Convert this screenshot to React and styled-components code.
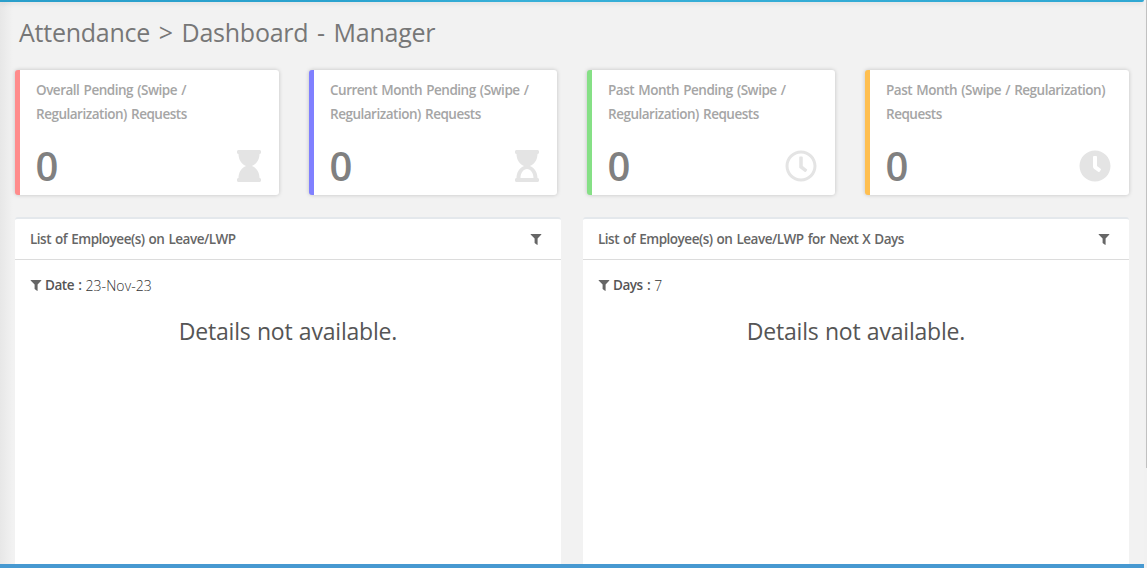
import React from "react";
import styled, { createGlobalStyle } from "styled-components";
import { FaHourglass, FaHourglassStart, FaRegClock, FaClock } from "react-icons/fa";

const GlobalStyle = createGlobalStyle`
  * { box-sizing: border-box; }
  body {
    margin: 0;
    overflow: hidden;
    background: #f2f2f2;
    color: #555;
    font-family: "Open Sans", "Noto Sans", sans-serif;
  }
`;

const Frame = styled.div`
  display: flex;
  width: 1147px;
  height: 568px;
  overflow: hidden;
`;

const Page = styled.div`
  display: flex;
  flex-direction: column;
  width: 1144px;
  height: 568px;
  background: linear-gradient(to right, #e7e7e7, #f2f2f2 13px);
`;

const TopBar = styled.div`
  flex: none;
  height: 2px;
  border-bottom-right-radius: 2px;
  background: linear-gradient(to right, #2a9fcb, #2ba3cf 30%, #38b0d8 45%, #30a8d3);
  box-shadow: 0 1px 5px rgba(0, 0, 0, 0.14);
`;

const Content = styled.main`
  flex: 1;
  display: flex;
  flex-direction: column;
  min-height: 0;
  padding: 0 14px 0 15px;
`;

const Title = styled.h1`
  flex: none;
  height: 68px;
  margin: 0;
  padding-left: 4px;
  font-size: 25px;
  font-weight: 400;
  line-height: 61px;
  letter-spacing: -0.25px;
  word-spacing: 2.5px;
  color: #777;
  white-space: nowrap;
`;

const Cards = styled.section`
  flex: none;
  display: grid;
  grid-template-columns: 264px 248px 248px 264px;
  column-gap: 30px;
`;

const Card = styled.article`
  display: flex;
  flex-direction: column;
  justify-content: space-between;
  height: 125px;
  padding: 8px 18px 13px 16px;
  border-left: 5px solid ${(p) => p.$accent};
  border-radius: 3px;
  background: #fff;
  box-shadow: 0 0 4px rgba(0, 0, 0, 0.2);
`;

const CardLabel = styled.div`
  font-size: 13.5px;
  font-weight: 600;
  line-height: 24px;
  letter-spacing: -0.49px;
  word-spacing: 1.2px;
  color: #a5a5a5;
  white-space: nowrap;
`;

const CardFooter = styled.div`
  display: flex;
  align-items: flex-end;
  justify-content: space-between;
  height: 33px;
  color: #e4e4e4;

  svg { display: block; height: 32px; width: ${(p) => p.$iconWidth}px; }
`;

const Count = styled.span`
  margin-left: -0.5px;
  font-size: 40px;
  font-weight: 600;
  line-height: 32px;
  color: #808080;
`;

const Panels = styled.section`
  flex: 1;
  display: grid;
  grid-template-columns: 546px 546px;
  column-gap: 22px;
  margin-top: 22px;
  min-height: 0;
`;

const Panel = styled.article`
  border-top: 2px solid #e4e8ec;
  border-radius: 3px 3px 0 0;
  background: #fff;
`;

const PanelHeader = styled.header`
  display: flex;
  align-items: center;
  justify-content: space-between;
  height: 41px;
  padding: 0 19px 0 15px;
  border-bottom: 1px solid #dcdcdc;
`;

const PanelTitle = styled.h2`
  margin: 0;
  font-size: 13.5px;
  font-weight: 600;
  letter-spacing: -0.49px;
  word-spacing: 1px;
  color: #666;
  white-space: nowrap;
`;

const Funnel = styled.svg`
  flex: none;
  width: 12px;
  height: 12px;
  fill: #666;
`;

const FilterIcon = () => (
  <Funnel viewBox="0 0 12 12">
    <path d="M1 1h10q.6 0 .4.6L7.6 5.6V11.5q0 .7-.6.3L4.6 10V5.6L.6 1.6Q.4 1 1 1z" />
  </Funnel>
);

const FilterRow = styled.div`
  display: flex;
  align-items: center;
  height: 20px;
  margin-top: 15px;
  padding-left: 15px;
  font-size: 14px;
  font-weight: 300;
  letter-spacing: 0.08px;
  white-space: nowrap;
  color: #333;

  strong {
    margin: 0 4px 0 3px;
    font-size: 13.5px;
    font-weight: 600;
    letter-spacing: -0.45px;
    word-spacing: 1.1px;
    color: #555;
  }
`;

const Empty = styled.p`
  margin: 18px 0 0;
  font-size: 23px;
  line-height: 36px;
  letter-spacing: -0.2px;
  word-spacing: 0.6px;
  text-align: center;
  color: #555;
`;

const BottomBar = styled.div`
  flex: none;
  height: 4px;
  background: #4799d1;
`;

const ScrollTrack = styled.div`
  width: 3px;
  padding-left: 2px;
  background: #f1f1f1;
`;

const ScrollThumb = styled.div`
  height: 468px;
  background: #c1c1c1;
`;

const cards = [
  { lines: ["Overall Pending (Swipe /", "Regularization) Requests"], accent: "#ff8c8c", Icon: FaHourglass, width: 24 },
  { lines: ["Current Month Pending (Swipe /", "Regularization) Requests"], accent: "#8080ff", Icon: FaHourglassStart, width: 24 },
  { lines: ["Past Month Pending (Swipe /", "Regularization) Requests"], accent: "#86e086", Icon: FaRegClock, width: 32 },
  { lines: ["Past Month (Swipe / Regularization)", "Requests"], accent: "#ffbf50", Icon: FaClock, width: 32 },
];

const panels = [
  { title: "List of Employee(s) on Leave/LWP", label: "Date :", value: "23-Nov-23" },
  { title: "List of Employee(s) on Leave/LWP for Next X Days", label: "Days :", value: "7" },
];

export default function App() {
  return (
    <Frame>
      <GlobalStyle />
      <Page>
        <TopBar />
        <Content>
          <Title>Attendance &gt; Dashboard - Manager</Title>
          <Cards>
            {cards.map(({ lines, accent, Icon, width }) => (
              <Card key={accent} $accent={accent}>
                <CardLabel>
                  {lines[0]}
                  <br />
                  {lines[1]}
                </CardLabel>
                <CardFooter $iconWidth={width}>
                  <Count>0</Count>
                  <Icon />
                </CardFooter>
              </Card>
            ))}
          </Cards>
          <Panels>
            {panels.map((panel) => (
              <Panel key={panel.title}>
                <PanelHeader>
                  <PanelTitle>{panel.title}</PanelTitle>
                  <FilterIcon />
                </PanelHeader>
                <FilterRow>
                  <FilterIcon />
                  <strong>{panel.label}</strong>
                  {panel.value}
                </FilterRow>
                <Empty>Details not available.</Empty>
              </Panel>
            ))}
          </Panels>
        </Content>
        <BottomBar />
      </Page>
      <ScrollTrack>
        <ScrollThumb />
      </ScrollTrack>
    </Frame>
  );
}
